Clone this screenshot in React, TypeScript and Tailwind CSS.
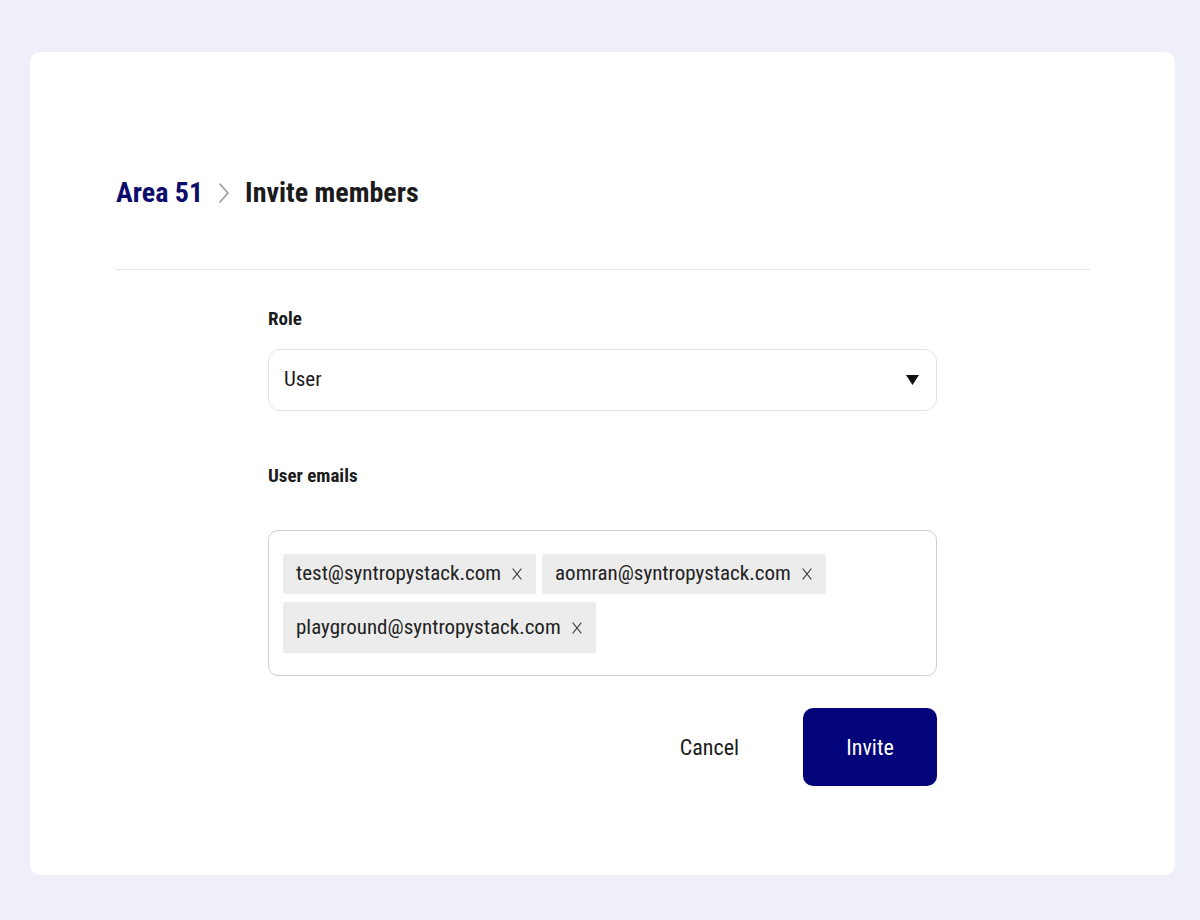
import { useState } from 'react';

const initialEmails = [
  { email: 'test@syntropystack.com', tall: false },
  { email: 'aomran@syntropystack.com', tall: false },
  { email: 'playground@syntropystack.com', tall: true },
];

export default function App() {
  const [emails, setEmails] = useState(initialEmails);

  return (
    <div className="min-h-screen w-full bg-[#efeff9] pt-[52px] pb-[45px] pl-[30px] pr-[25px] font-['Roboto_Condensed','Liberation_Sans',sans-serif]">
      <div className="h-[823px] rounded-[10px] bg-white px-[85px] pt-[123px]">
        {/* Breadcrumb */}
        <div className="flex items-center pl-px">
          <span className="text-[28px] font-bold leading-[36px] text-[#0c0c6c]">Area 51</span>
          <svg className="mx-[15px] h-[22px] w-[12px] text-[#9a9a9a]" viewBox="0 0 12 22" fill="none">
            <path d="M2 2l8 9-8 9" stroke="currentColor" strokeWidth="1.6" strokeLinecap="round" strokeLinejoin="round" />
          </svg>
          <span className="text-[28px] font-bold leading-[36px] text-[#1b1b1b]">Invite members</span>
        </div>

        <div className="mt-[58px] h-px bg-[#e6e6e6]" />

        <div className="mx-auto w-[669px] pt-[37px]">
          <label className="block text-[19px] font-bold leading-[24px] text-[#1b1b1b]">Role</label>
          <div className="mt-[18px] flex h-[62px] items-center justify-between rounded-[12px] border border-[#e2e2e2] pl-[15px] pr-[17px]">
            <span className="text-[21px] text-[#1b1b1b]">User</span>
            <svg className="h-[10px] w-[13px] text-[#111]" viewBox="0 0 13 10">
              <path d="M0 0h13L6.5 10z" fill="currentColor" />
            </svg>
          </div>

          <label className="mt-[53px] block text-[19px] font-bold leading-[24px] text-[#1b1b1b]">User emails</label>
          <div className="mt-[42px] flex min-h-[145px] flex-wrap content-start gap-x-[6px] gap-y-[8px] rounded-[10px] border border-[#cfcfcf] px-[14px] pt-[23px] pb-[22px]">
            {emails.map((e) => (
              <div
                key={e.email}
                className={`flex items-center rounded-[2px] bg-[#ececec] pl-[13px] pr-[14px] ${e.tall ? 'h-[51px]' : 'h-[40px]'}`}
              >
                <span className="text-[21px] text-[#222]">{e.email}</span>
                <button
                  className="ml-[11px] flex h-[20px] w-[10px] items-center justify-center text-[#333]"
                  onClick={() => setEmails(emails.filter((x) => x.email !== e.email))}
                  aria-label="Remove"
                >
                  <svg className="h-[12px] w-[10px]" viewBox="0 0 10 12" fill="none">
                    <path d="M1 1l8 10M9 1L1 11" stroke="currentColor" strokeWidth="1.2" strokeLinecap="round" />
                  </svg>
                </button>
              </div>
            ))}
          </div>

          <div className="mt-[32px] flex items-center justify-end gap-[32px]">
            <button className="px-[32px] text-[22px] text-[#1b1b1b]">Cancel</button>
            <button className="h-[78px] w-[134px] rounded-[10px] bg-[#03037a] text-[22px] text-white">Invite</button>
          </div>
        </div>
      </div>
    </div>
  );
}
